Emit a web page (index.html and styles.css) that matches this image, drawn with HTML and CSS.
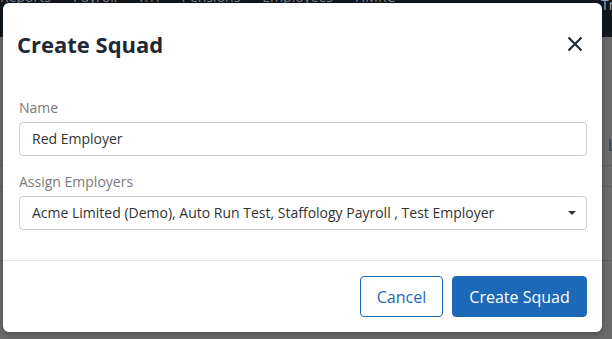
FILE: index.html
```html
<!DOCTYPE html>
<html lang="en">
<head>
    <meta charset="UTF-8">
    <meta name="viewport" content="width=device-width, initial-scale=1.0">
    <title>Create Squad</title>
    <link rel="stylesheet" href="styles.css">
</head>
<body>
    <div class="navbar">
        <span>Reports</span>
        <span>Payroll</span>
        <span>RTI</span>
        <span>Pensions</span>
        <span>Employees</span>
        <span>HMRC</span>
        <span class="nav-right">Tri</span>
    </div>
    <div class="page">
        <div class="page-row"><span class="page-link">L</span></div>
        <div class="page-row short"></div>
        <div class="page-row"></div>
    </div>

    <!-- Create Squad modal -->
    <div class="modal">
        <div class="modal-header">
            <h2>Create Squad</h2>
            <button class="close" aria-label="Close">
                <svg width="16" height="16" viewBox="0 0 16 16">
                    <path d="M1.5 1.5 L14.5 14.5 M14.5 1.5 L1.5 14.5" stroke="#27313d" stroke-width="2.3" fill="none"/>
                </svg>
            </button>
        </div>
        <div class="modal-body">
            <div class="field">
                <label>Name</label>
                <div class="input">Red Employer</div>
            </div>
            <div class="field">
                <label>Assign Employers</label>
                <div class="input select">
                    <span>Acme Limited (Demo), Auto Run Test, Staffology Payroll , Test Employer</span>
                    <span class="caret"></span>
                </div>
            </div>
        </div>
        <div class="modal-footer">
            <button class="btn btn-outline">Cancel</button>
            <button class="btn btn-primary">Create Squad</button>
        </div>
    </div>
</body>
</html>
```

FILE: styles.css
```css
body {
    font-family: "Open Sans", "Liberation Sans", sans-serif;
    background-color: #6b6b6b;
    margin: 0;
    padding: 0;
    height: 339px;
    overflow: hidden;
}
.navbar {
    background-color: #12171e;
    height: 37px;
    display: flex;
    gap: 22px;
    padding-left: 0;
    font-size: 14px;
    line-height: 16px;
    color: #7d8288;
    overflow: hidden;
}
.navbar span {
    margin-top: -11px;
}
.navbar .nav-right {
    margin-left: auto;
    margin-top: -3px;
    margin-right: -6px;
    color: #9aa3ad;
}
.page {
    padding-top: 88px;
}
.page-row {
    height: 40px;
    border-bottom: 1px solid #5e5e5e;
    display: flex;
    justify-content: flex-end;
    align-items: center;
}
.page-row.short {
    height: 20px;
}
.page-row:last-child {
    height: 73px;
}
.page-link {
    color: #2f3a55;
    font-size: 16px;
    margin-right: -4px;
}
.modal {
    position: absolute;
    top: 3px;
    left: 3px;
    width: 599px;
    height: 329px;
    background: #fff;
    border-radius: 6px;
    box-shadow: 0 2px 6px rgba(0, 0, 0, 0.3);
    display: flex;
    flex-direction: column;
}
.modal-header {
    display: flex;
    align-items: center;
    justify-content: space-between;
    padding: 26px 19px 39px 14px;
}
.modal-header h2 {
    margin: 0;
    font-size: 22px;
    line-height: 30px;
    font-weight: 700;
    color: #1f2935;
}
.close {
    background: none;
    border: none;
    padding: 0;
    width: 16px;
    height: 16px;
    cursor: pointer;
}
.modal-body {
    padding: 0 15px 0 16px;
    display: flex;
    flex-direction: column;
    gap: 16px;
}
.field label {
    display: block;
    font-size: 14px;
    line-height: 20px;
    color: #7a7a7a;
    margin-bottom: 4px;
}
.input {
    height: 32px;
    border: 1px solid #cccccc;
    border-radius: 4px;
    padding: 0 12px;
    font-size: 14px;
    line-height: 32px;
    color: #333;
}
.select {
    display: flex;
    justify-content: space-between;
    align-items: center;
}
.caret {
    width: 0;
    height: 0;
    border-left: 4px solid transparent;
    border-right: 4px solid transparent;
    border-top: 4px solid #333;
    margin-right: -2px;
}
.modal-footer {
    margin-top: auto;
    border-top: 1px solid #e5e5e5;
    padding: 15px;
    display: flex;
    justify-content: flex-end;
    gap: 9px;
}
.btn {
    font-family: "Open Sans", "Liberation Sans", sans-serif;
    font-size: 16px;
    height: 41px;
    border-radius: 4px;
    cursor: pointer;
}
.btn-outline {
    background: #fff;
    color: #1c69b7;
    border: 1px solid #1c69b7;
    width: 83px;
}
.btn-primary {
    background-color: #1c69b7;
    color: #fff;
    border: 1px solid #1c69b7;
    width: 135px;
}
```
